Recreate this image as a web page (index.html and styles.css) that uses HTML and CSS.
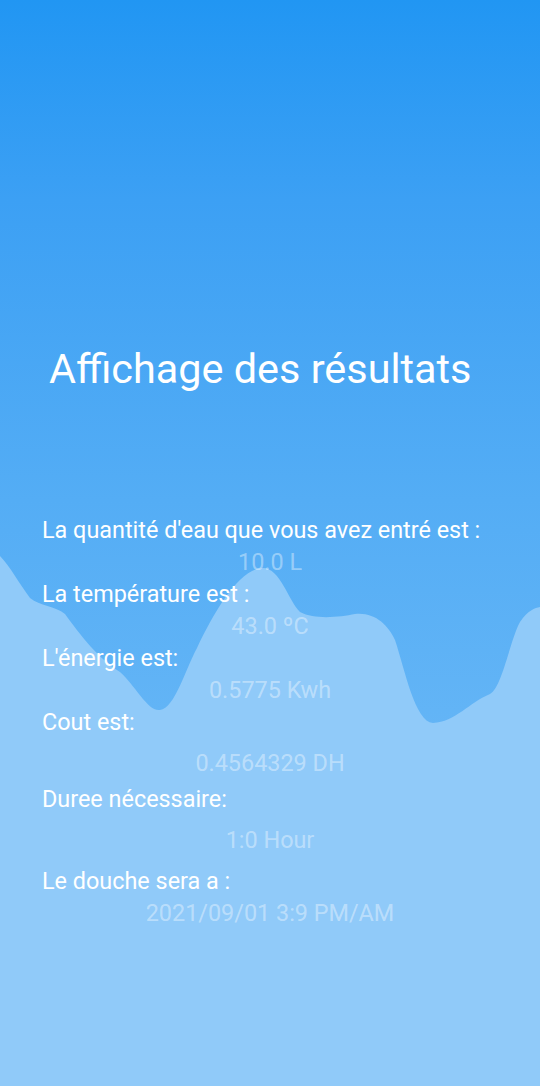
FILE: index.html
```html
<!DOCTYPE html>
<html lang="fr">
<head>
    <meta charset="UTF-8">
    <meta name="viewport" content="width=device-width, initial-scale=1.0">
    <title>Affichage des résultats</title>
    <link rel="stylesheet" href="styles.css">
</head>
<body>
    <div class="screen">
        <!-- decorative wave behind the results -->
        <svg class="wave" viewBox="0 540 540 546" preserveAspectRatio="none">
            <path d="M0,556 C10,566 20,585 30,598 C40,606 55,606 65,614 C80,635 100,660 120,672 C135,685 148,712 160,710 C175,708 185,670 197,648 C215,610 240,568 263,568 C280,568 288,600 300,612 C315,620 340,617 355,614 C375,612 388,625 395,640 C405,670 415,722 433,723 C455,722 470,702 490,694 C502,688 510,640 520,622 C528,610 535,608 540,607 L540,1086 L0,1086 Z" fill="#90caf9"/>
        </svg>

        <div class="content">
            <h1 class="title">Affichage des résultats</h1>

            <div class="results">
                <p class="label">La quantité d'eau que vous avez entré est :</p>
                <p class="value">10.0 L</p>
                <p class="label">La température est :</p>
                <p class="value">43.0 ºC</p>
                <p class="label">L'énergie est:</p>
                <p class="value">0.5775 Kwh</p>
                <p class="label">Cout est:</p>
                <p class="value value-spaced">0.4564329 DH</p>
                <p class="label label-spaced">Duree nécessaire:</p>
                <p class="value value-spaced">1:0 Hour</p>
                <p class="label label-wide">Le douche sera a :</p>
                <p class="value">2021/09/01 3:9 PM/AM</p>
            </div>
        </div>
    </div>
</body>
</html>
```

FILE: styles.css
```css
* {
    box-sizing: border-box;
}
body {
    margin: 0;
    font-family: Roboto, "Liberation Sans", sans-serif;
    overflow: hidden;
}
.screen {
    position: relative;
    width: 540px;
    height: 1086px;
    background: linear-gradient(to bottom, #2196f3 0px, #3ca0f4 200px, #54adf5 500px, #64b5f6 740px);
    overflow: hidden;
}
.wave {
    position: absolute;
    left: 0;
    top: 540px;
    width: 540px;
    height: 546px;
}
.content {
    position: relative;
    padding-top: 345px;
}
.title {
    margin: 0 0 0 49px;
    font-size: 41.4px;
    line-height: 48px;
    font-weight: 400;
    color: #fff;
}
.results {
    margin-top: 121px;
}
.results p {
    margin: 0;
    font-size: 23.4px;
    line-height: 32px;
    white-space: nowrap;
}
.label {
    padding-left: 42px;
    color: #fff;
}
.value {
    text-align: center;
    color: rgba(255, 255, 255, 0.4);
}
.value-spaced {
    margin-top: 9px !important;
}
.label-spaced {
    margin-top: 4px !important;
}
.label-wide {
    margin-top: 9px !important;
}
```
